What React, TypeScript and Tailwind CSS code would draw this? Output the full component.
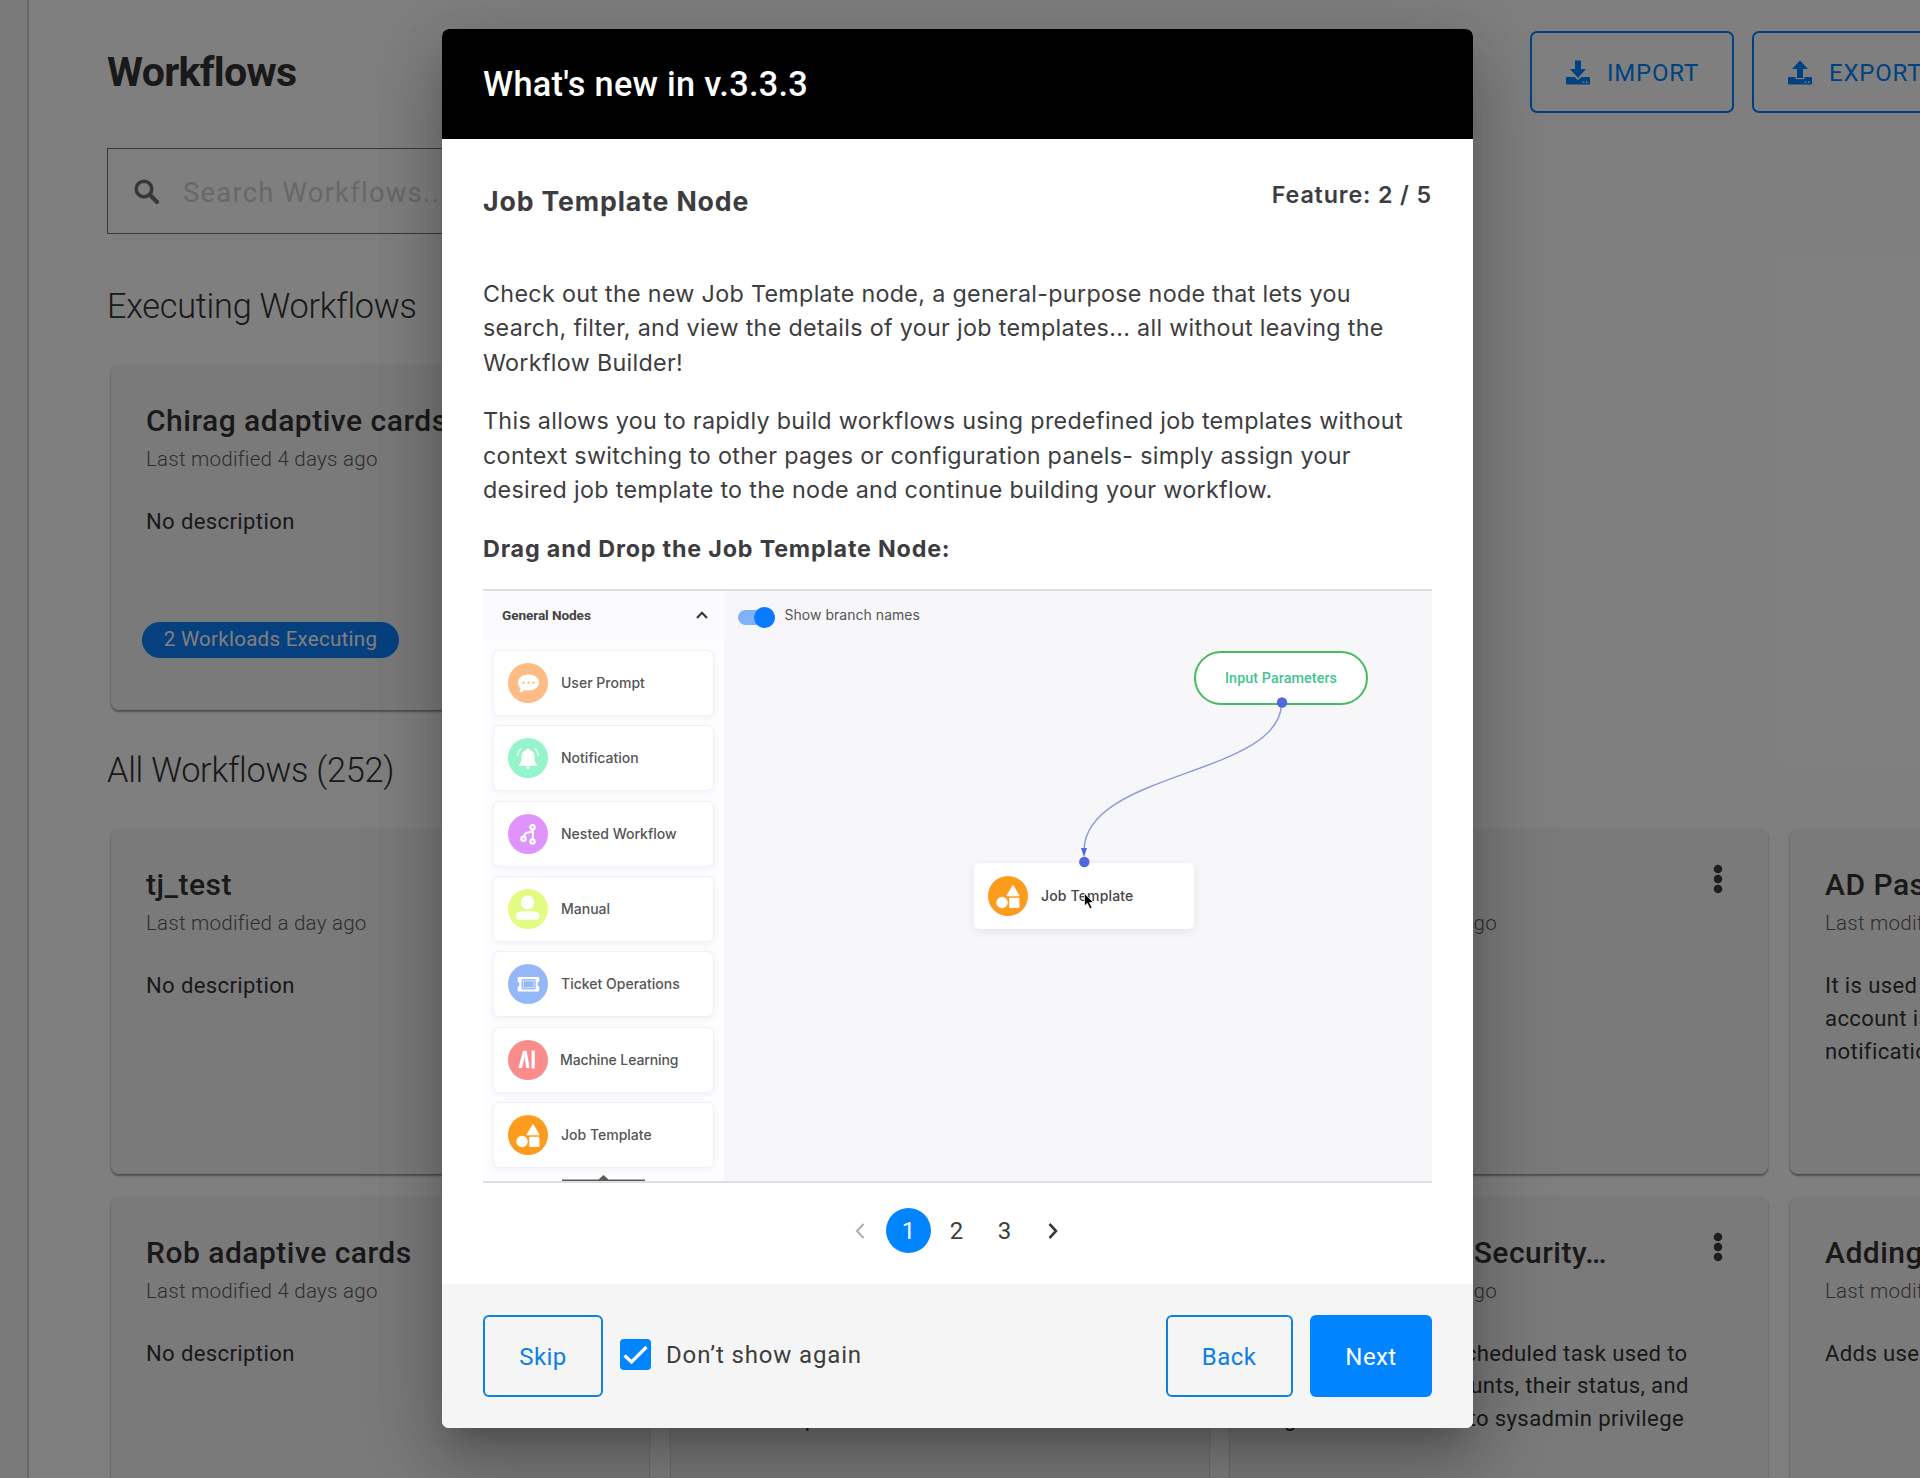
import React from "react";

type Workflow = { title?: string; modified?: string; lines: string[]; badge?: string };

const executing: Workflow = {
  title: "Chirag adaptive cards",
  modified: "Last modified 4 days ago",
  lines: ["No description"],
  badge: "2 Workloads Executing",
};

const workflows: Workflow[] = [
  { title: "tj_test", modified: "Last modified a day ago", lines: ["No description"] },
  { lines: [] },
  { modified: "Last modified 4 days ago", lines: [] },
  {
    title: "AD Password Reset",
    modified: "Last modified 4 days ago",
    lines: ["It is used to reset when an", "account is locked and send", "notification to the user"],
  },
  { title: "Rob adaptive cards", modified: "Last modified 4 days ago", lines: ["No description"] },
  { lines: ["", "", "Removes provision"] },
  {
    title: "Backup Server Security…",
    modified: "Last modified 4 days ago",
    lines: [
      "This is the regular scheduled task used to",
      "update all user accounts, their status, and",
      "logins with consent to sysadmin privilege",
    ],
  },
  { title: "Adding users", modified: "Last modified 4 days ago", lines: ["Adds users to a group"] },
];

function Kebab() {
  return (
    <svg className="absolute right-[44px] top-[35px]" width="12" height="30" viewBox="0 0 12 30" fill="#3d3d3d">
      <circle cx="6" cy="5" r="4.3" />
      <circle cx="6" cy="15" r="4.3" />
      <circle cx="6" cy="25" r="4.3" />
    </svg>
  );
}

function WorkflowCard({ w }: { w: Workflow }) {
  return (
    <article className="relative h-[345px] w-[538px] overflow-hidden rounded-[8px] bg-[#f5f5f5] pl-[35px] pt-[38px] shadow-[0_2px_2px_rgba(0,0,0,0.35),0_1px_3px_rgba(0,0,0,0.12)]">
      <h3 className="h-[36px] whitespace-nowrap text-[30px] font-medium leading-[36px] tracking-[0.5px] text-[#333]">{w.title}</h3>
      <p className="mt-[5px] h-[30px] whitespace-nowrap text-[20.57px] font-light leading-[30px] tracking-[0.23px] text-[#5c5c5c]">{w.modified}</p>
      <div className="mt-[31px] whitespace-nowrap text-[22.1px] leading-[32.8px] tracking-[0.36px] text-[#333]">
        {w.lines.map((l, i) => (
          <p key={i} className="h-[32.8px]">
            {l}
          </p>
        ))}
      </div>
      {w.badge ? (
        <span className="absolute left-[31px] top-[257px] flex h-[36px] w-[257px] items-center justify-center rounded-full bg-[#0f80ff] pb-[1px] text-[20.57px] tracking-[0.25px] text-white">
          {w.badge}
        </span>
      ) : null}
      <Kebab />
    </article>
  );
}

function DriveIcon({ up }: { up?: boolean }) {
  return (
    <svg width="24" height="25" viewBox="0 0 24 25" fill="#0084ff">
      {up ? <path d="M12 0.5 L20 9 H15 V18 H9 V9 H4 Z" /> : <path d="M9 0.5 H15 V9 H20 L12 18 L4 9 H9 Z" />}
      <path
        fillRule="evenodd"
        d={
          up
            ? "M1 17 H7.5 V18 Q7.5 19.3 9 19.3 H15 Q16.5 19.3 16.5 18 V17 H23 Q24 17 24 18 V23.5 Q24 24.5 23 24.5 H1 Q0 24.5 0 23.5 V18 Q0 17 1 17 Z M16.7 21.4 v1.6 h1.6 v-1.6 Z M19.9 21.4 v1.6 h1.6 v-1.6 Z"
            : "M1 17 H8.6 L11.2 19.6 Q12 20.2 12.8 19.6 L15.4 17 H23 Q24 17 24 18 V23.5 Q24 24.5 23 24.5 H1 Q0 24.5 0 23.5 V18 Q0 17 1 17 Z M16.7 21.4 v1.6 h1.6 v-1.6 Z M19.9 21.4 v1.6 h1.6 v-1.6 Z"
        }
      />
    </svg>
  );
}

function HeaderButton({ label, up }: { label: string; up?: boolean }) {
  return (
    <button className="flex h-[82px] w-[204px] shrink-0 items-center gap-[17px] rounded-[7px] border-2 border-[#0084ff] pl-[34px] text-2xl tracking-[0.8px] text-[#0084ff]">
      <DriveIcon up={up} />
      <span className="mt-[1px]">{label}</span>
    </button>
  );
}

function Background() {
  return (
    <div className="flex h-[1478px] w-[1920px] overflow-hidden bg-white">
      <aside className="w-[29px] shrink-0 border-r-2 border-[#cfcfcf] bg-[#f4f4f4]" />
      <main className="w-[1891px] shrink-0 pl-[78px] pt-[31px]">
        <header className="flex h-[82px] items-center">
          <h1 className="w-[1423px] shrink-0 text-[41.14px] font-bold leading-[48px] tracking-[-0.7px] text-[#333]">Workflows</h1>
          <div className="flex gap-[18px]">
            <HeaderButton label="IMPORT" />
            <HeaderButton label="EXPORT" up />
          </div>
        </header>
        <div className="mt-[35px] flex h-[86px] w-[540px] items-center border border-[#707070] pl-[26px]">
          <svg width="25" height="25" viewBox="0 0 25 25" fill="none" stroke="#707070" strokeWidth="3.6">
            <circle cx="10" cy="10" r="7.8" />
            <path d="M15.6 15.6 L23 23" strokeLinecap="round" strokeWidth="4.2" />
          </svg>
          <span className="ml-[24px] mt-[4px] text-[27.4px] leading-[40px] tracking-[1.24px] text-[#d0d0d0]">Search Workflows...</span>
        </div>
        <h2 className="mt-[52px] text-[34.3px] font-light leading-[40px] tracking-[-0.26px] text-[#333]">Executing Workflows</h2>
        <div className="ml-[4px] mt-[39px]">
          <WorkflowCard w={executing} />
        </div>
        <h2 className="mt-[40px] text-[34.3px] font-light leading-[40px] tracking-[-0.26px] text-[#333]">All Workflows (252)</h2>
        <div className="ml-[4px] mt-[39px] grid w-[2217px] grid-cols-4 gap-x-[21.7px] gap-y-[22.7px]">
          {workflows.map((w, i) => (
            <WorkflowCard key={i} w={w} />
          ))}
        </div>
      </main>
    </div>
  );
}

const nodes = [
  { label: "User Prompt", icon: "prompt" },
  { label: "Notification", icon: "bell" },
  { label: "Nested Workflow", icon: "nested" },
  { label: "Manual", icon: "user" },
  { label: "Ticket Operations", icon: "ticket" },
  { label: "Machine Learning", icon: "ai" },
  { label: "Job Template", icon: "job" },
];

function NodeIcon({ kind }: { kind: string }) {
  const fills: Record<string, string> = {
    prompt: "#fdbb85",
    bell: "#93f5c9",
    nested: "#de94fa",
    user: "#e3fb83",
    ticket: "#94b7f7",
    ai: "#fb8c8c",
    job: "#fd9b1d",
  };
  return (
    <svg className="shrink-0" width="40" height="40" viewBox="0 0 40 40">
      <circle cx="20" cy="20" r="20" fill={fills[kind]} />
      {kind === "prompt" && (
        <>
          <path d="M20.500 11.500 C26.500 11.500 31 15 31 19.500 C31 24.200 26.500 27.500 20.500 27.500 C19 27.500 17.700 27.300 16.500 26.900 C15 28.300 13 29.500 11 29.300 C12 28 12.600 26.300 12.500 24.900 C10.900 23.500 10 21.500 10 19.500 C10 15 14.500 11.500 20.500 11.500 Z" fill="#fff" />
          <circle cx="15.500" cy="19.600" r="1.200" fill="#fdbb85" />
          <circle cx="20.500" cy="19.600" r="1.200" fill="#fdbb85" />
          <circle cx="25.500" cy="19.600" r="1.200" fill="#fdbb85" />
        </>
      )}
      {kind === "bell" && (
        <>
          <path d="M20 10 C21 10 21.500 10.800 21.500 11.700 C25 12.600 26.500 15.200 26.500 18.500 C26.500 23 27.300 25.200 29 27.200 V28 H11 V27.200 C12.700 25.200 13.500 23 13.500 18.500 C13.500 15.200 15 12.600 18.500 11.700 C18.500 10.800 19 10 20 10 Z M18.300 28.800 H21.700 C21.700 30.300 21.100 31 20 31 C18.900 31 18.300 30.300 18.300 28.800 Z" fill="#fff" />
          <path d="M13 10.500 Q9.900 13.500 9.400 17.500 M27 10.500 Q30.100 13.500 30.600 17.500" fill="none" stroke="#fff" strokeWidth="1.600" strokeLinecap="round" />
        </>
      )}
      {kind === "nested" && (
        <>
          <path d="M24.800 13.500 V28 M24.800 16 C24.500 19 20 17.500 17.500 19.500 C16.300 20.600 15.800 23 15.500 25" fill="none" stroke="#fff" strokeWidth="2" />
          <circle cx="24.500" cy="13.300" r="3.200" fill="#fff" />
          <circle cx="15.500" cy="24.800" r="3.200" fill="#fff" />
          <circle cx="24.500" cy="27.500" r="3.200" fill="#fff" />
          <circle cx="24.500" cy="13.300" r="1" fill="#de94fa" />
          <circle cx="15.500" cy="24.800" r="1" fill="#de94fa" />
          <circle cx="24.500" cy="27.500" r="1" fill="#de94fa" />
        </>
      )}
      {kind === "user" && (
        <>
          <circle cx="19.500" cy="13.500" r="6.700" fill="#fff" />
          <path d="M11.500 22.500 Q20 21.500 28.500 22.500 Q31.500 23.500 31.500 27 Q31.500 30.800 28 30.800 H11 Q7.500 30.800 7.500 27 Q7.500 23.500 11.500 22.500 Z" fill="#fff" />
        </>
      )}
      {kind === "ticket" && (
        <>
          <path d="M11 13 H30 Q31.300 13 31.300 14.300 V17.500 Q29.500 18 29.500 20.200 Q29.500 22.500 31.300 23 V26.200 Q31.300 27.500 30 27.500 H11 Q9.700 27.500 9.700 26.200 V23 Q11.500 22.500 11.500 20.200 Q11.500 18 9.700 17.500 V14.300 Q9.700 13 11 13 Z" fill="#fff" />
          <rect x="14" y="15.600" width="13.200" height="9.400" rx="0.800" fill="#a9c5f9" stroke="#94b7f7" strokeWidth="1" />
          <rect x="15.300" y="16.900" width="10.600" height="6.800" fill="#94b7f7" stroke="#e6effe" strokeWidth="0.700" />
        </>
      )}
      {kind === "ai" && (
        <>
          <path d="M10.500 28 L14.600 12 Q14.900 10.800 16 10.800 H17.500 Q18.600 10.800 18.900 12 L21.600 28 H18.200 L16.700 17 L14 28 Z" fill="#fff" />
          <path d="M25.200 10.500 V28.500" stroke="#fff" strokeWidth="3.200" />
        </>
      )}
      {kind === "job" && (
        <>
          <path d="M25 9.500 L31.200 19.800 H18.800 Z" fill="#fff" stroke="#fff" strokeWidth="1" strokeLinejoin="round" />
          <circle cx="14" cy="26.500" r="5.700" fill="#fff" />
          <rect x="21.200" y="21.800" width="10.200" height="10.200" rx="1" fill="#fff" />
        </>
      )}
    </svg>
  );
}

function NodeShot() {
  return (
    <div className="mt-[23px] flex h-[594px] w-[949px] overflow-hidden border-y-2 border-[#dedee0]">
      <div className="relative w-[241px] shrink-0 overflow-hidden bg-[#fdfcfe]">
        <div className="flex h-[49px] items-center justify-between bg-[#fbfafc] pl-[19px] pr-[16px]">
          <span className="font-[Roboto] text-[13.600px] font-bold tracking-[-0.080px] text-[#444]">General Nodes</span>
          <svg className="mb-[2px]" width="12" height="8" viewBox="0 0 12 8" fill="none" stroke="#333" strokeWidth="2">
            <path d="M1 7 L6 1.800 L11 7" />
          </svg>
        </div>
        <div className="flex flex-col gap-[9.300px] pl-[9.500px] pt-[10px]">
          {nodes.map((n) => (
            <div key={n.label} className="flex h-[66px] w-[221.500px] shrink-0 items-center gap-[13px] rounded-[6px] border border-[#f1f0f4] bg-white pl-[14.500px] shadow-[0_2px_6px_rgba(60,50,90,0.05)]">
              <NodeIcon kind={n.icon} />
              <span className={`mb-[1px] whitespace-nowrap text-[14px] font-medium text-[#555] ${n.icon === "ai" ? "-ml-[1px] tracking-[-0.100px]" : "tracking-[0.010px]"}`}>{n.label}</span>
            </div>
          ))}
        </div>
        <svg className="absolute bottom-0 left-[79px]" width="83" height="6" viewBox="0 0 83 6" fill="#5a5a5a">
          <path d="M0 4.500 H36.500 L41.500 0 L46.500 4.500 H83 V6 H0 Z" />
        </svg>
      </div>
      <div className="relative grow bg-[#f7f6f9]">
        <div className="flex items-center pl-[14px] pt-[16px]">
          <div className="relative h-[15px] w-[37px] rounded-full bg-[#80b1fb]">
            <div className="absolute -top-[3px] right-0 size-[21px] rounded-full bg-[#0a7aff]" />
          </div>
          <span className="-mt-[2px] ml-[9.500px] h-[22px] text-[14px] leading-[20px] tracking-[0.030px] text-[#555]">Show branch names</span>
        </div>
        <div className="absolute left-[470px] top-[60px] flex h-[54px] w-[174px] items-center justify-center rounded-full border-2 border-[#45bb5f] bg-white pt-[1px] font-[Roboto] text-[14.300px] font-medium tracking-[0.100px] text-[#45c490]">
          Input Parameters
        </div>
        <div className="absolute left-[249.500px] top-[272px] flex h-[66px] w-[220px] items-center gap-[13px] rounded-[5px] bg-white pl-[14.500px] shadow-[0_3px_10px_rgba(0,0,0,0.07)]">
          <NodeIcon kind="job" />
          <span className="mb-[1px] text-[14px] font-medium tracking-[0.150px] text-[#444]">Job Template</span>
        </div>
        <svg className="absolute left-0 top-0" width="708" height="590" viewBox="0 0 708 590">
          <path d="M557.500 112 C557.500 185 360 180 360 260" fill="none" stroke="#8f9bdb" strokeWidth="1.500" />
          <path d="M357 257 H363 L360 266 Z" fill="#4c6ad8" />
          <circle cx="558" cy="111.500" r="5.200" fill="#4f69dd" />
          <circle cx="360.300" cy="271" r="5.200" fill="#4f69dd" />
          <path d="M360.500 302.500 V315 L363.300 312.300 L366 317.800 L368 316.800 L365.500 311.500 H369.500 Z" fill="#000" stroke="#fff" strokeWidth="0.700" />
        </svg>
      </div>
    </div>
  );
}

function Pagination() {
  return (
    <nav className="ml-[353px] mt-[25px] flex h-[45px] items-center gap-[3px] font-[Roboto] text-2xl text-[#3d3d3d]">
      <span className="flex w-[47px] justify-center">
        <svg width="10" height="16" viewBox="0 0 10 16" fill="none" stroke="#b0b0b0" strokeWidth="2.200">
          <path d="M8.500 1 L2 8 L8.500 15" />
        </svg>
      </span>
      <span className="flex size-[45px] items-center justify-center rounded-full bg-[#0084ff] text-white">1</span>
      <span className="w-[45px] text-center">2</span>
      <span className="w-[45px] text-center">3</span>
      <span className="flex w-[46px] justify-center">
        <svg width="10" height="16" viewBox="0 0 10 16" fill="none" stroke="#3a3a3a" strokeWidth="2.600">
          <path d="M1.500 1 L8 8 L1.500 15" />
        </svg>
      </span>
    </nav>
  );
}

function Modal() {
  return (
    <section className="flex h-[1399px] w-[1031px] flex-col overflow-hidden rounded-[7px] bg-white shadow-[0_19px_26px_-12px_rgba(0,0,0,0.2),0_41px_65px_5px_rgba(0,0,0,0.14),0_15px_79px_14px_rgba(0,0,0,0.12)]">
      <header className="flex h-[110px] shrink-0 items-center bg-black pl-[41px] pt-[2px] font-[Roboto] text-[34.300px] font-medium tracking-[0.270px] text-white">
        What's new in v.3.3.3
      </header>
      <div className="h-[1145px] shrink-0 px-[41px] font-[Inter] text-[#3d3d3f]">
        <div className="flex h-[138px] items-start justify-between">
          <h2 className="mt-[45px] text-[26.700px] font-bold leading-[34px] tracking-[0.850px]">Job Template Node</h2>
          <span className="mt-[39px] text-[23.300px] font-semibold leading-[34px] tracking-[0.850px]">Feature: 2 / 5</span>
        </div>
        <div className="flex flex-col gap-[24.500px] whitespace-nowrap text-[23.300px] leading-[34.300px] tracking-[0.310px]">
          <p>
            Check out the new Job Template node, a general-purpose node that lets you
            <br />
            search, filter, and view the details of your job templates... all without leaving the
            <br />
            Workflow Builder!
          </p>
          <p>
            This allows you to rapidly build workflows using predefined job templates without
            <br />
            context switching to other pages or configuration panels- simply assign your
            <br />
            desired job template to the node and continue building your workflow.
          </p>
          <p className="font-bold tracking-[0.810px]">Drag and Drop the Job Template Node:</p>
        </div>
        <NodeShot />
        <Pagination />
      </div>
      <footer className="flex h-[144px] shrink-0 items-start bg-[#f5f5f5] px-[41px] pt-[31px] font-[Roboto] text-2xl tracking-[0.430px]">
        <button className="h-[82px] w-[120px] rounded-[6px] border-2 border-[#0f80dc] pt-[2px] text-[#0d80e4]">Skip</button>
        <span className="ml-[17px] mt-[24px] flex size-[31px] items-center justify-center rounded-[4px] bg-[#0084ff]">
          <svg width="25" height="20" viewBox="0 0 25 20" fill="none" stroke="#fff" strokeWidth="3.300">
            <path d="M1.500 10.500 L8.500 17 L23.500 2" />
          </svg>
        </span>
        <span className="ml-[15px] mt-[22px] leading-[36px] tracking-[0.850px] text-[#3d3d3d]">Don’t show again</span>
        <button className="ml-auto h-[82px] w-[127px] rounded-[6px] border-2 border-[#0f80dc] pt-[2px] text-[#0d80e4]">Back</button>
        <button className="ml-[17.500px] h-[82px] w-[122px] rounded-[6px] bg-[#0084ff] pt-[2px] text-white">Next</button>
      </footer>
    </section>
  );
}

export default function App() {
  return (
    <div className="relative h-[1478px] w-[1920px] overflow-hidden font-[Roboto]">
      <Background />
      <div className="absolute inset-0 bg-black/50 pl-[442px] pt-[29px]">
        <Modal />
      </div>
    </div>
  );
}
